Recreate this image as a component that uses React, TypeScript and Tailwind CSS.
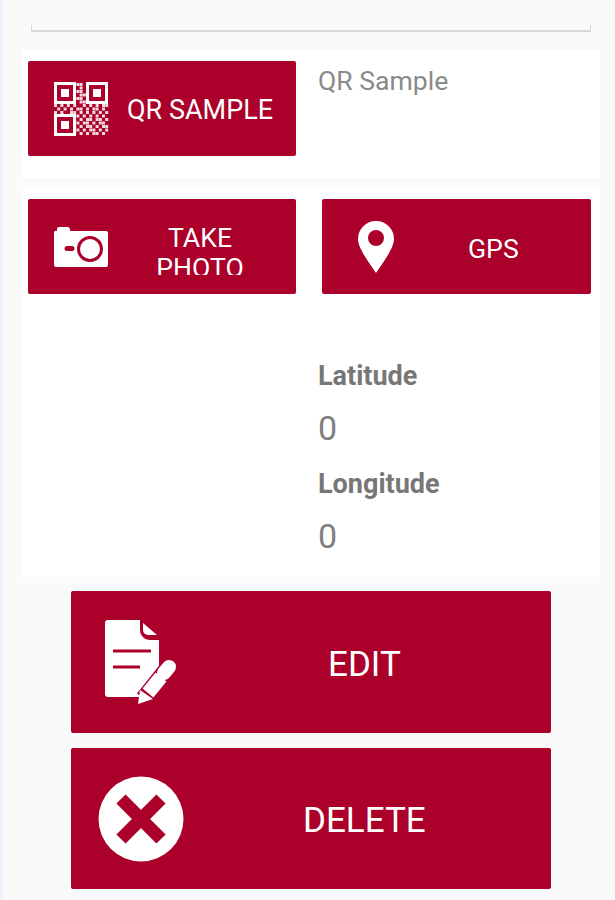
const RED = "bg-[#ab0029]";

// rows of the data area, drawn at 3.2 x 3.5px a cell
const qrCells = [
  "00000001101000000",
  "00000000101000000",
  "00000001101000000",
  "00000000110000000",
  "00000001101000000",
  "00000000110000000",
  "10101010010101011",
  "01010101101011010",
  "10100110101010101",
  "00000001010101010",
  "00000010101101101",
  "00000001011010110",
  "00000010101101011",
  "00000001010110101",
  "00000010101011010",
];

function QrIcon() {
  const finder = (x: number, y: number) => (
    <g key={`${x}-${y}`}>
      <rect x={x + 1.5} y={y + 1.5} width="19" height="19" fill="none" stroke="#fff" strokeWidth="3" />
      <rect x={x + 7} y={y + 7} width="8" height="8" fill="#fff" />
    </g>
  );
  return (
    <svg width="56" height="56" viewBox="0 0 56 56" className="shrink-0">
      {finder(1, 1)}
      {finder(33, 1)}
      {finder(1, 33)}
      {qrCells.map((row, r) =>
        row.split("").map((c, i) =>
          c === "1" ? (
            <rect key={`${r}-${i}`} x={1 + i * 3.2} y={2 + r * 3.5} width="3" height="3" fill="#fff" opacity="0.85" />
          ) : null,
        ),
      )}
    </svg>
  );
}

function CameraIcon() {
  return (
    <svg width="56" height="40" viewBox="0 0 56 40" className="mt-[1px] shrink-0">
      <path
        fillRule="evenodd"
        fill="#fff"
        d="M6 0h8a3 3 0 0 1 3 4h36a2 2 0 0 1 2 2v32a2 2 0 0 1-2 2H3a2 2 0 0 1-2-2V6a2 2 0 0 1 3-2V2a2 2 0 0 1 2-2ZM37 9a13 13 0 1 0 0 26a13 13 0 0 0 0-26Zm0 3a10 10 0 1 1 0 20a10 10 0 0 1 0-20ZM14 19a2.5 2.5 0 0 0 0 5h5a2.5 2.5 0 0 0 0-5Z"
      />
    </svg>
  );
}

function PinIcon() {
  return (
    <svg width="36" height="52" viewBox="0 0 36 52" className="shrink-0">
      <path
        fillRule="evenodd"
        fill="#fff"
        d="M18 0a18 18 0 0 1 18 18c0 9-10 22-18 34C10 40 0 27 0 18A18 18 0 0 1 18 0Zm0 9a8 8 0 1 0 0 16a8 8 0 0 0 0-16Z"
      />
    </svg>
  );
}

function EditIcon() {
  return (
    <svg width="74" height="88" viewBox="0 0 74 88" className="mt-[3px] shrink-0">
      <path fill="#fff" d="M3 0h32v10c0 6 5 10 10 10h9v37L34 77H3a3 3 0 0 1-3-3V3a3 3 0 0 1 3-3Z" />
      <path fill="#fff" d="M38 3l14 12H43a5 5 0 0 1-5-5Z" />
      <path d="M8 31h38M8 47h27" stroke="#ab0029" strokeWidth="3" fill="none" />
      <path d="M39 79L66 45" stroke="#ab0029" strokeWidth="18" fill="none" />
      <path d="M43 73L56 57" stroke="#fff" strokeWidth="14" fill="none" />
      <path d="M59 53L64 47" stroke="#fff" strokeWidth="14" strokeLinecap="round" fill="none" />
      <path fill="#fff" d="M33 84l2-14l13 9Z" />
    </svg>
  );
}

function DeleteIcon() {
  return (
    <svg width="86" height="86" viewBox="0 0 86 86" className="shrink-0">
      <circle cx="43" cy="43" r="42.5" fill="#fff" />
      <path d="M23 23l40 40M63 23L23 63" stroke="#ab0029" strokeWidth="13" fill="none" />
    </svg>
  );
}

export default function App() {
  return (
    <div className="flex h-[900px] w-[615px] flex-col overflow-hidden border-l-[3px] border-[#f1f1fd] bg-[#fafafa] pl-[19px] pr-[15px] font-['Roboto',sans-serif]">
      <div className="ml-[9px] mr-[9px] mt-[25px] h-[7px] shrink-0 border-x border-b-2 border-[#d8d8d8]" />

      <div className="mt-[18px] flex h-[128px] shrink-0 gap-[22px] bg-white pl-[6px] pt-[11px]">
        <div className={`flex h-[95px] w-[268px] items-center rounded-[2px] pl-[25px] ${RED}`}>
          <QrIcon />
          <span className="ml-[18px] mt-[4px] whitespace-nowrap text-[27px] text-white">QR SAMPLE</span>
        </div>
        <p className="whitespace-nowrap text-[26.6px] leading-[40px] text-[#8a8a8a]">QR Sample</p>
      </div>

      <div className="mt-[10px] h-[389px] shrink-0 bg-white pl-[6px] pt-[11px]">
        <div className="flex gap-[26px]">
          <div className={`flex h-[95px] w-[268px] items-center rounded-[2px] pl-[25px] ${RED}`}>
            <CameraIcon />
            <div className="ml-[20px] mt-[5px] flex h-[52px] w-[132px] flex-col overflow-hidden pl-[10px] text-center text-[26.6px] leading-[30px] text-white">
              <span className="shrink-0">TAKE</span>
              <span className="shrink-0">PHOTO</span>
            </div>
          </div>
          <div className={`flex h-[95px] w-[269px] items-center rounded-[2px] pl-[36px] ${RED}`}>
            <PinIcon />
            <span className="ml-[74px] mt-[4px] text-[26.6px] text-white">GPS</span>
          </div>
        </div>
        <div className="mt-[60px] flex flex-col pl-[290px] text-[#777]">
          <span className="text-[27px] font-bold leading-[44px]">Latitude</span>
          <span className="pb-[3px] text-[34px] leading-[61px] text-[#808080]">0</span>
          <span className="text-[27px] font-bold leading-[44px]">Longitude</span>
          <span className="pb-[3px] text-[34px] leading-[61px] text-[#808080]">0</span>
        </div>
      </div>

      <div className={`ml-[49px] mt-[14px] flex h-[142px] w-[480px] shrink-0 items-center rounded-[2px] pl-[34px] ${RED}`}>
        <EditIcon />
        <span className="ml-[149px] mt-[6px] text-[35px] text-white">EDIT</span>
      </div>
      <div className={`ml-[49px] mt-[15px] flex h-[141px] w-[480px] shrink-0 items-center rounded-[2px] pl-[27px] ${RED}`}>
        <DeleteIcon />
        <span className="ml-[119px] mt-[5px] text-[35px] text-white">DELETE</span>
      </div>
    </div>
  );
}
